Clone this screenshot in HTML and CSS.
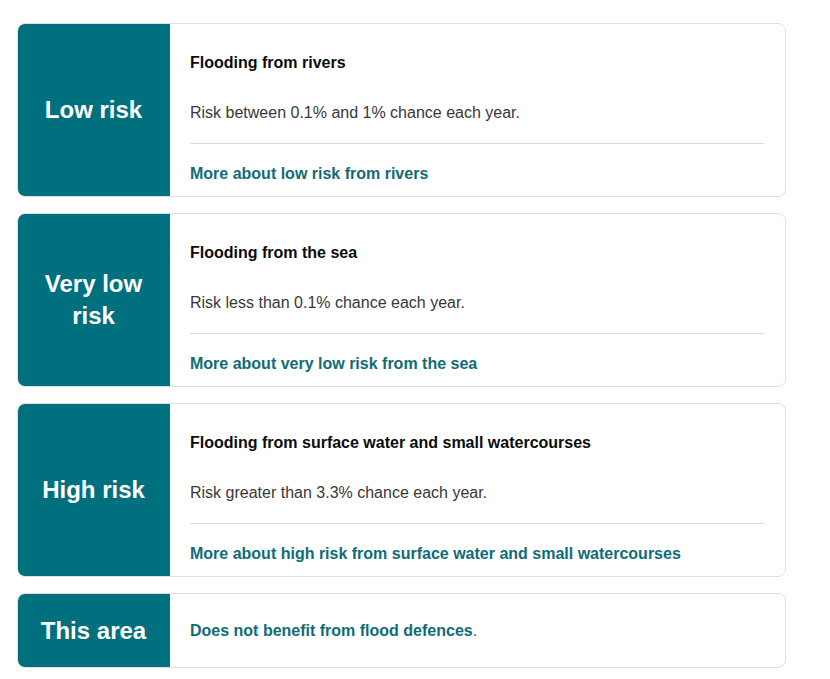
FILE: index.html
```html
<!DOCTYPE html>
<html lang="en">
<head>
  <meta charset="UTF-8" />
  <title>Flood risk summary</title>
  <meta name="viewport" content="width=device-width, initial-scale=1.0" />
  <link rel="stylesheet" href="styles.css">
</head>
<body>

<div class="page">
  <p class="intro">Ratings are for guidance, they help you plan ahead and may change yearly.</p>

  <!-- Rivers -->
  <div class="risk-card">
    <div class="risk-label">Low risk</div>
    <div class="risk-body">
      <h3 class="risk-title">Flooding from rivers</h3>
      <p class="risk-text">Risk between 0.1% and 1% chance each year.</p>
      <a class="risk-link" href="#">More about low risk from rivers</a>
    </div>
  </div>

  <!-- Sea -->
  <div class="risk-card">
    <div class="risk-label">Very low risk</div>
    <div class="risk-body">
      <h3 class="risk-title">Flooding from the sea</h3>
      <p class="risk-text">Risk less than 0.1% chance each year.</p>
      <a class="risk-link" href="#">More about very low risk from the sea</a>
    </div>
  </div>

  <!-- Surface water -->
  <div class="risk-card">
    <div class="risk-label">High risk</div>
    <div class="risk-body">
      <h3 class="risk-title">Flooding from surface water and small watercourses</h3>
      <p class="risk-text">Risk greater than 3.3% chance each year.</p>
      <a class="risk-link" href="#">More about high risk from surface water and small watercourses</a>
    </div>
  </div>

  <!-- Defences -->
  <div class="risk-card short">
    <div class="risk-label">This area</div>
    <div class="risk-body">
      <p class="defences"><a class="risk-link" href="#">Does not benefit from flood defences</a>.</p>
    </div>
  </div>
</div>

</body>
</html>
```

FILE: styles.css
```css
* {
  box-sizing: border-box;
}

html, body {
  margin: 0;
  padding: 0;
  background: #fff;
  font-family: 'Liberation Sans', Arial, sans-serif;
  color: #0b0c0c;
  overflow: hidden;
}

.page {
  width: 769px;
  margin-left: 17px;
  display: flex;
  flex-direction: column;
  gap: 16px;
}

.intro {
  margin: -18px 0 5px 0;
  padding-left: 50px;
  font-size: 16px;
  line-height: 20px;
  color: #6f7173;
}

.risk-card {
  display: flex;
  border: 1px solid #dedede;
  border-radius: 8px;
  overflow: hidden;
  min-height: 174px;
}

.risk-card.short {
  min-height: 75px;
}

.risk-label {
  width: 153px;
  flex-shrink: 0;
  margin: -1px 0 -1px -1px;
  background: #00707f;
  color: #fff;
  font-size: 24px;
  font-weight: bold;
  line-height: 32px;
  display: flex;
  align-items: center;
  justify-content: center;
  text-align: center;
  padding: 0 20px;
}

.risk-body {
  flex: 1;
  padding: 30px 21px 11px 20px;
}

.risk-title {
  margin: 0;
  font-size: 16px;
  line-height: 18px;
  font-weight: bold;
  color: #0b0c0c;
}

.risk-text {
  margin: 31px 0 0 0;
  padding-bottom: 20px;
  border-bottom: 1px solid #dcdcdc;
  font-size: 16px;
  line-height: 20px;
  color: #383838;
}

.risk-link {
  display: block;
  margin-top: 20px;
  font-size: 16px;
  line-height: 20px;
  font-weight: bold;
  color: #0f6c77;
  text-decoration: none;
}

.risk-card.short .risk-body {
  padding: 0 21px 0 20px;
  display: flex;
  align-items: center;
}

.defences {
  margin: 0;
  font-size: 16px;
  line-height: 20px;
  color: #0f6c77;
}

.defences .risk-link {
  display: inline;
  margin: 0;
}
```
